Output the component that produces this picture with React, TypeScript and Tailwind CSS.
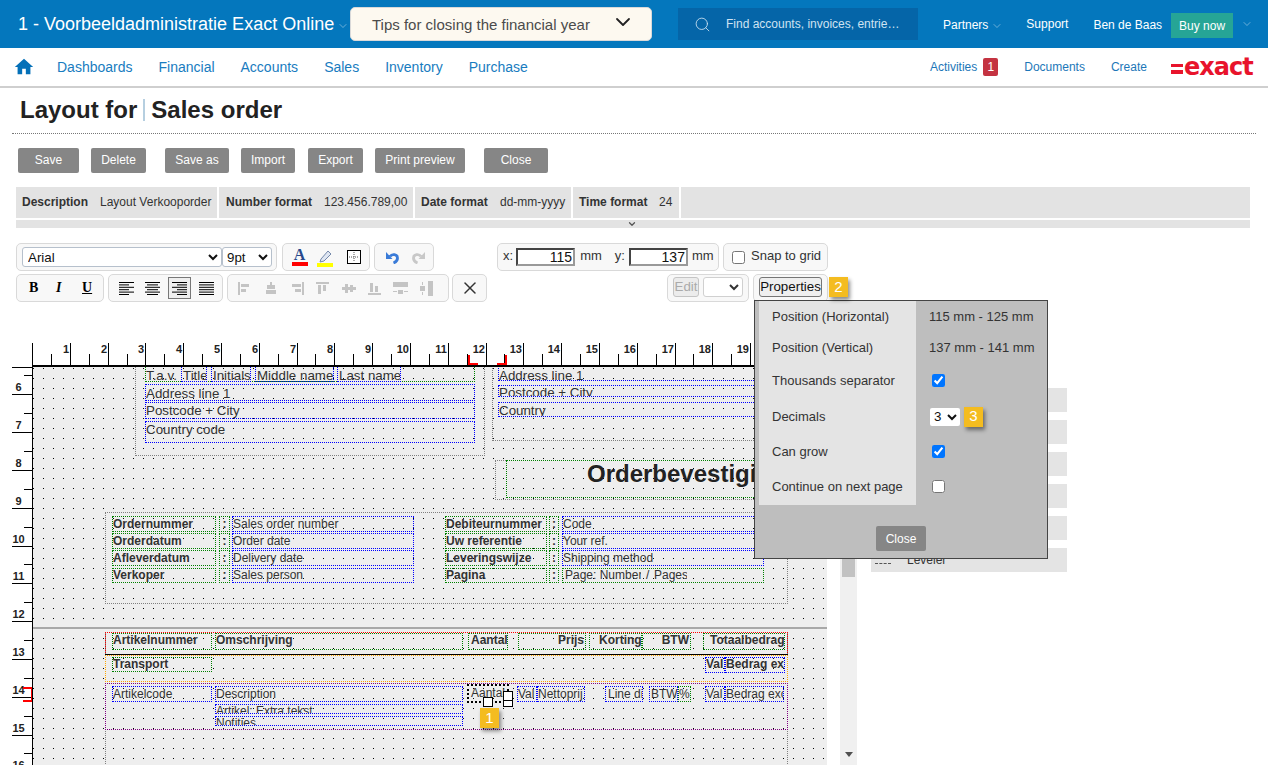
import React from "react";
import { ChevronDown, Search, X } from "lucide-react";
import { MdHome } from "react-icons/md";

const Gap = ({ w }: { w: number }) => <div className="shrink-0" style={{ width: w }} />;

type BoxP = {
  a: number; b: number; c: number; d: number; col: string; t?: string; bold?: boolean; size?: number;
  right?: boolean; center?: boolean; pt?: number; pl?: number; thick?: boolean;
};
const CX = 33, CY = 367;
const Box = ({ a, b, c, d, col, t, bold, size = 12, right, center, pt = 0, pl = 0, thick }: BoxP) => (
  <div
    className="absolute overflow-hidden whitespace-nowrap leading-[13px] text-[#333]"
    style={{
      left: a - CX, top: b - CY, width: c - a, height: d - b,
      border: `${thick ? 2 : 1}px dotted ${col}`,
      fontSize: size, fontWeight: bold ? 700 : 400,
      textAlign: right ? "right" : center ? "center" : "left",
      paddingTop: pt, paddingLeft: pl, paddingRight: right ? 1 : 0,
    }}
  >
    {t}
  </div>
);

const G = "#008000", B = "#0000ff", GR = "#808080";
const rows: [number, number][] = [[516, 532], [533, 549], [550, 566], [568, 583]];
const leftL = ["Ordernummer", "Orderdatum", "Afleverdatum", "Verkoper"];
const leftV = ["Sales order number", "Order date", "Delivery date", "Sales person"];
const rightL = ["Debiteurnummer", "Uw referentie", "Leveringswijze", "Pagina"];
const rightV = ["Code", "Your ref.", "Shipping method"];

const boxes: BoxP[] = [
  { a: 135, b: 340, c: 485, d: 456, col: GR },
  { a: 145, b: 340, c: 475, d: 382, col: G },
  { a: 145, b: 367, c: 180, d: 382, col: "transparent", t: "T.a.v.", size: 13.33, pt: 1 },
  { a: 181, b: 340, c: 207, d: 382, col: B, t: "Title", size: 13.33, pt: 28, pl: 1 },
  { a: 211, b: 340, c: 251, d: 382, col: B, t: "Initials", size: 13.33, pt: 28, pl: 1 },
  { a: 255, b: 340, c: 334, d: 382, col: B, t: "Middle name", size: 13.33, pt: 28, pl: 1 },
  { a: 337, b: 340, c: 401, d: 382, col: B, t: "Last name", size: 13.33, pt: 28, pl: 1 },
  { a: 145, b: 384, c: 475, d: 401, col: B, t: "Address line 1", size: 13.33, pt: 2 },
  { a: 145, b: 402, c: 475, d: 419, col: B, t: "Postcode + City", size: 13.33, pt: 1 },
  { a: 145, b: 421, c: 475, d: 443, col: B, t: "Country code", size: 13.33, pt: 1 },
  { a: 492, b: 340, c: 900, d: 441, col: GR },
  { a: 498, b: 340, c: 900, d: 381, col: B, t: "Address line 1", size: 13.33, pt: 28 },
  { a: 498, b: 385, c: 900, d: 397, col: B, t: "Postcode + City", size: 13.33 },
  { a: 498, b: 402, c: 900, d: 417, col: B, t: "Country", size: 13.33, pt: 1 },
  { a: 495, b: 460, c: 900, d: 500, col: GR },
  { a: 506, b: 460, c: 900, d: 498, col: G },
  { a: 105, b: 512, c: 788, d: 604, col: GR },
  { a: 105, b: 632, c: 788, d: 800, col: GR },
  { a: 105, b: 632, c: 788, d: 655, col: "#ff0000" },
  { a: 105, b: 655, c: 788, d: 682, col: "#ffa500" },
  { a: 105, b: 683, c: 788, d: 730, col: "#800080" },
  { a: 112, b: 633, c: 212, d: 650, col: G, t: "Artikelnummer", bold: true },
  { a: 215, b: 633, c: 463, d: 650, col: G, t: "Omschrijving", bold: true },
  { a: 468, b: 633, c: 508, d: 650, col: G, t: "Aantal", bold: true, pl: 2 },
  { a: 518, b: 633, c: 586, d: 650, col: G, t: "Prijs", bold: true, right: true },
  { a: 589, b: 633, c: 642, d: 650, col: G, t: "Korting", bold: true, pl: 9 },
  { a: 642, b: 633, c: 691, d: 650, col: G, t: "BTW", bold: true, right: true },
  { a: 703, b: 633, c: 785, d: 650, col: G, t: "Totaalbedrag", bold: true, pl: 6 },
  { a: 112, b: 657, c: 212, d: 672, col: G, t: "Transport", bold: true },
  { a: 705, b: 657, c: 725, d: 673, col: B, t: "Val", bold: true },
  { a: 725, b: 657, c: 785, d: 673, col: B, t: "Bedrag ex", bold: true },
  { a: 112, b: 686, c: 212, d: 702, col: B, t: "Artikelcode", pt: 1 },
  { a: 215, b: 686, c: 463, d: 702, col: B, t: "Description", pt: 1 },
  { a: 215, b: 704, c: 463, d: 714, col: B, t: "Artikel: Extra tekst" },
  { a: 215, b: 716, c: 463, d: 726, col: B, t: "Notities" },
  { a: 467, b: 684, c: 509, d: 703, col: "#000", t: "Aantal", thick: true, pl: 2, pt: 1 },
  { a: 517, b: 686, c: 537, d: 702, col: B, t: "Val", pt: 1 },
  { a: 537, b: 686, c: 585, d: 702, col: B, t: "Nettoprij", pt: 1 },
  { a: 605, b: 686, c: 643, d: 702, col: B, t: "Line di", pl: 2, pt: 1 },
  { a: 649, b: 686, c: 678, d: 702, col: B, t: "BTW", pl: 1, pt: 1 },
  { a: 678, b: 686, c: 691, d: 702, col: G, t: "%", pt: 1 },
  { a: 705, b: 686, c: 725, d: 702, col: B, t: "Val", pt: 1 },
  { a: 725, b: 686, c: 784, d: 702, col: B, t: "Bedrag exc", pt: 1 },
  ...rows.flatMap(([y1, y2], i): BoxP[] => {
    const pt = i < 3 ? 1 : 0;
    return [
      { a: 112, b: y1, c: 216, d: y2, col: G, t: leftL[i], bold: true, pt },
      { a: 219, b: y1, c: 230, d: y2, col: G, t: ":", bold: true, center: true, pt },
      { a: 232, b: y1, c: 414, d: y2, col: B, t: leftV[i], pt },
      { a: 445, b: y1, c: 547, d: y2, col: G, t: rightL[i], bold: true, pt },
      { a: 549, b: y1, c: 559, d: y2, col: G, t: ":", bold: true, center: true, pt },
      ...(i < 3 ? [{ a: 562, b: y1, c: 764, d: y2, col: B, t: rightV[i], pt } as BoxP] : [{ a: 562, b: y1, c: 764, d: y2, col: G } as BoxP]),
    ];
  }),
  { a: 563, b: 568, c: 642, d: 583, col: "transparent", t: "Page: Number", pl: 1 },
  { a: 642, b: 568, c: 653, d: 583, col: "transparent", t: "/", pl: 3 },
  { a: 653, b: 568, c: 688, d: 583, col: "transparent", t: "Pages" },
];

const Badge = ({ n, cls }: { n: string; cls: string }) => (
  <div className={`flex h-[20px] w-[19px] items-center justify-center bg-[#f4bc20] text-[15px] text-white shadow-[2px_3px_4px_rgba(0,0,0,0.45)] ${cls}`}>
    {n}
  </div>
);

const Group = ({ w, children, cls = "" }: { w: number; children?: React.ReactNode; cls?: string }) => (
  <div className={`flex h-[28px] shrink-0 items-center rounded-[5px] border border-[#d9d9d9] bg-[#f8f8f8] ${cls}`} style={{ width: w }}>
    {children}
  </div>
);

const Lines = ({ rows, color = "#000" }: { rows: [number, number][]; color?: string }) => (
  <svg width="15" height="13" viewBox="0 0 15 13" className="shrink-0">
    {rows.map(([x, w], i) => (
      <rect key={i} x={x} y={i * 2.4} width={w} height="1" fill={color} />
    ))}
  </svg>
);

const alignIcons: React.ReactNode[] = [
  <><rect x="1" y="1" width="2" height="13" /><rect x="4" y="3" width="8" height="3" /><rect x="4" y="8" width="5" height="3" /></>,
  <><rect x="7" y="1" width="2" height="3" /><rect x="4" y="4" width="8" height="4" /><rect x="3" y="9" width="10" height="4" /></>,
  <><rect x="13" y="1" width="2" height="13" /><rect x="3" y="3" width="9" height="3" /><rect x="6" y="8" width="6" height="3" /></>,
  <><rect x="1" y="1" width="13" height="2" /><rect x="3" y="4" width="3" height="9" /><rect x="8" y="4" width="3" height="6" /></>,
  <><rect x="1" y="6" width="14" height="3" /><rect x="4" y="3" width="3" height="9" /><rect x="9" y="4" width="3" height="7" /></>,
  <><rect x="1" y="12" width="13" height="2" /><rect x="3" y="2" width="3" height="9" /><rect x="8" y="5" width="3" height="6" /></>,
  <><rect x="0" y="1" width="15" height="5" /><rect x="5" y="9" width="5" height="4" /><rect x="0" y="10" width="4" height="1" /><rect x="11" y="10" width="4" height="1" /></>,
  <><rect x="9" y="0" width="5" height="15" /><rect x="1" y="5" width="5" height="5" /><rect x="3" y="1" width="1" height="3" /><rect x="3" y="11" width="1" height="3" /></>,
];

export default function App() {
  const font = { fontFamily: '"Liberation Sans", Arial, sans-serif' };
  return (
    <div className="relative h-[765px] w-[1268px] overflow-hidden bg-white text-[12px] text-[#333]" style={font}>
      {/* top bar */}
      <header className="flex h-[48px] items-center bg-[#0477bd] text-white">
        <span className="ml-[18px] w-[316px] whitespace-nowrap text-[18px]">1 - Voorbeeldadministratie Exact Online</span>
        <ChevronDown size={12} strokeWidth={1} className="ml-[3px] mt-[3px] shrink-0 text-[#cfe4f3]" />
        <div className="ml-[1px] flex h-[34px] w-[302px] items-center justify-between rounded-[5px] border border-[#d9d9d9] bg-[#fdf9f0] pl-[21px] pr-[16px] text-[15px] text-[#4b4b4b]">
          <span className="mt-[2px]">Tips for closing the financial year</span>
          <ChevronDown size={24} strokeWidth={1.8} className="mt-[-4px] text-[#222]" />
        </div>
        <div className="ml-[26px] flex h-[32px] w-[240px] items-center bg-[#0565a8] pl-[16px] text-[#cfe3f2]">
          <Search size={17} strokeWidth={1.2} />
          <span className="ml-[15px]">Find accounts, invoices, entrie…</span>
        </div>
        <span className="ml-[25px] mt-[2px]">Partners</span>
        <ChevronDown size={12} strokeWidth={1} className="ml-[3px] mt-[3px] text-[#cfe4f3]" />
        <span className="ml-[23px]">Support</span>
        <span className="ml-[25px] mt-[2px]">Ben de Baas</span>
        <div className="ml-[9px] mt-[3px] flex h-[25px] w-[62px] items-center justify-center bg-[#26a596]">Buy now</div>
        <ChevronDown size={12} strokeWidth={1} className="ml-[8px] text-[#cfe4f3]" />
      </header>

      {/* nav */}
      <nav className="flex h-[40px] items-center border-b-2 border-[#cfcfcf] text-[14px] text-[#187cc0]">
        <MdHome size={22} className="ml-[13px] text-[#0470b8]" />
        <span className="ml-[22px]">Dashboards</span>
        <span className="ml-[26px]">Financial</span>
        <span className="ml-[26px]">Accounts</span>
        <span className="ml-[26px]">Sales</span>
        <span className="ml-[26px]">Inventory</span>
        <span className="ml-[26px]">Purchase</span>
        <span className="ml-[402px] text-[12px] text-[#1d77b8]">Activities</span>
        <span className="ml-[6px] flex h-[18px] w-[15px] items-center justify-center rounded-[2px] bg-[#c43341] text-[12px] text-white">1</span>
        <span className="ml-[26px] text-[12px] text-[#1d77b8]">Documents</span>
        <span className="ml-[26px] text-[12px] text-[#1d77b8]">Create</span>
        <span className="ml-[24px] flex items-center leading-none text-[#e8142c]">
          <span className="mr-[1px] mt-[3px] flex flex-col gap-[3px]">
            <span className="block h-[3px] w-[12px] bg-[#e8142c]" />
            <span className="block h-[4px] w-[12px] bg-[#e8142c]" />
          </span>
          <span className="mt-[-1px] text-[24px] font-bold tracking-[-1px]" style={{ fontFamily: '"DejaVu Sans", sans-serif' }}>exact</span>
        </span>
      </nav>

      {/* title */}
      <div className="mx-[12px] flex h-[46px] items-center border-b border-dotted border-[#777] pb-[2px] pl-[8px] text-[24px] font-bold leading-none text-[#222]">
        Layout for
        <span className="mx-[6px] h-[22px] w-[2px] bg-[#b6cfe0]" />
        Sales order
      </div>

      {/* buttons */}
      <div className="mt-[14px] flex h-[25px] pl-[18px] text-[12px] text-white">
        {[["Save", 61, 12], ["Delete", 55, 19], ["Save as", 64, 12], ["Import", 54, 13], ["Export", 55, 12], ["Print preview", 90, 19], ["Close", 64, 0]].map(([t, w, g]) => (
          <React.Fragment key={t as string}>
            <div className="flex items-center justify-center rounded-[2px] bg-[#868686] pb-[1px]" style={{ width: w as number }}>{t}</div>
            <Gap w={g as number} />
          </React.Fragment>
        ))}
      </div>

      {/* info */}
      <div className="ml-[16px] mt-[14px] flex h-[31px] w-[1234px] gap-[2px] text-[12px] text-[#333]">
        <div className="flex w-[201px] items-center bg-[#e3e3e3] pb-[2px] pl-[6px]"><b className="w-[78px]">Description</b>Layout Verkooporder</div>
        <div className="flex w-[194px] items-center bg-[#e3e3e3] pb-[2px] pl-[7px]"><b className="w-[98px]">Number format</b>123.456.789,00</div>
        <div className="flex w-[156px] items-center bg-[#e3e3e3] pb-[2px] pl-[6px]"><b className="w-[79px]">Date format</b>dd-mm-yyyy</div>
        <div className="flex w-[106px] items-center bg-[#e3e3e3] pb-[2px] pl-[6px]"><b className="w-[80px]">Time format</b>24</div>
        <div className="flex-1 bg-[#e3e3e3]" />
      </div>
      <div className="ml-[16px] mt-[2px] flex h-[8px] w-[1234px] items-center bg-[#e3e3e3] pl-[611px]">
        <ChevronDown size={10} strokeWidth={3} className="text-[#555]" />
      </div>

      {/* toolbar row 1 */}
      <div className="ml-[16px] mt-[15px] flex h-[28px] items-center">
        <Group w={261} cls="pl-[5px]">
          <select defaultValue="Arial" className="h-[20px] w-[200px] rounded-[3px] border border-[#b6c0cc] bg-white pl-[1px] text-[13.33px] text-[#111]"><option>Arial</option></select>
          <select defaultValue="9pt" className="h-[20px] w-[50px] rounded-[3px] border border-[#b6c0cc] bg-white text-[13.33px] text-[#111]"><option>9pt</option></select>
        </Group>
        <Group w={88} cls="ml-[5px] pl-[8px]">
          <div className="flex w-[17px] flex-col items-center leading-none">
            <span className="h-[13px] text-[16px] font-bold leading-[13px] text-[#28498c]" style={{ fontFamily: '"Liberation Serif", serif' }}>A</span>
            <span className="mt-[1px] h-[4px] w-[16px] bg-[#f00]" />
          </div>
          <svg width="17" height="19" viewBox="0 0 17 19" className="ml-[9px]">
            <path d="M4 11 L11 3 L14 6 L7 13 L3 14 Z" fill="#dfe6f2" stroke="#7488aa" strokeWidth="1" />
            <rect x="0" y="15" width="16" height="4" fill="#ffff00" />
          </svg>
          <svg width="14" height="14" viewBox="0 0 14 14" className="ml-[13px]">
            <rect x="0.5" y="0.5" width="13" height="13" fill="#fff" stroke="#000" />
            <path d="M7 2v10M2 7h10" stroke="#555" strokeDasharray="1 1" />
          </svg>
        </Group>
        <Group w={60} cls="ml-[4px] pl-[10px]">
          <svg width="14" height="14" viewBox="0 0 14 14"><path d="M5 6.5 C7 3.5 12.5 4 12.5 8 C12.5 10 11 12 8.5 13" fill="none" stroke="#3a7bd8" strokeWidth="2.8" /><path d="M1 2 L1 9 L7.5 9 Z" fill="#3a7bd8" /></svg>
          <svg width="14" height="14" viewBox="0 0 14 14" className="ml-[13px]"><path d="M9 6.5 C7 3.5 1.5 4 1.5 8 C1.5 10 3 12 5.5 13" fill="none" stroke="#c8c8c8" strokeWidth="2.8" /><path d="M13 2 L13 9 L6.5 9 Z" fill="#c8c8c8" /></svg>
        </Group>
        <Group w={222} cls="ml-[63px] pl-[5px] text-[13px]">
          <span className="mb-[2px]">x:</span>
          <input readOnly value="115" className="ml-[3px] h-[18px] w-[59px] border-2 border-b-[#999] border-l-[#444] border-r-[#999] border-t-[#444] bg-white pr-[1px] text-right text-[14px] text-[#111]" />
          <span className="mb-[2px] ml-[5px]">mm</span>
          <span className="mb-[2px] ml-[13px]">y:</span>
          <input readOnly value="137" className="ml-[4px] h-[18px] w-[59px] border-2 border-b-[#999] border-l-[#444] border-r-[#999] border-t-[#444] bg-white pr-[1px] text-right text-[14px] text-[#111]" />
          <span className="mb-[2px] ml-[4px]">mm</span>
        </Group>
        <Group w={105} cls="ml-[4px] pl-[8px] text-[13px]">
          <input type="checkbox" readOnly className="h-[13px] w-[13px]" />
          <span className="mb-[2px] ml-[6px]">Snap to grid</span>
        </Group>
      </div>

      {/* toolbar row 2 */}
      <div className="ml-[16px] mt-[3px] flex h-[28px] items-center">
        <Group w={88} cls="pl-[12px]">
          <span className="w-[27px] text-[14px] font-bold leading-none text-black" style={{ fontFamily: '"Liberation Serif", serif' }}>B</span>
          <span className="w-[26px] text-[14px] font-bold italic leading-none text-black" style={{ fontFamily: '"Liberation Serif", serif' }}>I</span>
          <span className="text-[14px] font-bold leading-none text-black underline" style={{ fontFamily: '"Liberation Serif", serif' }}>U</span>
        </Group>
        <Group w={115} cls="ml-[4px] pl-[10px]">
          <Lines rows={[[0, 15], [0, 10], [0, 15], [0, 10], [0, 15], [0, 10]]} />
          <div className="ml-[11px]"><Lines rows={[[0, 15], [2, 11], [0, 15], [2, 11], [0, 15], [2, 11]]} /></div>
          <div className="ml-[8px] flex h-[22px] w-[23px] items-center justify-center border border-[#777] bg-[#eee]"><Lines rows={[[0, 15], [5, 10], [0, 15], [5, 10], [0, 15], [5, 10]]} /></div>
          <div className="ml-[8px]"><Lines rows={[[0, 15], [0, 15], [0, 15], [0, 15], [0, 15], [0, 15]]} /></div>
        </Group>
        <Group w={222} cls="ml-[4px] gap-[11px] pl-[9px]">
          {alignIcons.map((n, i) => (
            <svg key={i} width="15" height="15" viewBox="0 0 15 15" fill="#c4c4c4" className="shrink-0">{n}</svg>
          ))}
        </Group>
        <Group w={35} cls="ml-[3px] justify-center">
          <X size={20} strokeWidth={1.8} className="text-[#333]" />
        </Group>
        <Group w={82} cls="ml-[180px] pb-[2px] pl-[5px]">
          <div className="flex h-[20px] w-[26px] items-center justify-center rounded-[3px] border border-[#c4c4c4] bg-[#ececec] text-[13.33px] text-[#aaa]">Edit</div>
          <select disabled className="ml-[4px] h-[20px] w-[40px] rounded-[3px] border border-[#d0d0d0] bg-white" />
        </Group>
        <Group w={75} cls="ml-[4px] pb-[2px] pl-[5px]">
          <div className="flex h-[20px] w-[63px] items-center justify-center rounded-[3px] border border-[#767676] bg-[#efefef] text-[13.33px] text-[#111]">Properties</div>
        </Group>
        <Badge n="2" cls="z-10 mb-[2px] ml-[1px]" />
      </div>

      {/* designer */}
      <div className="ml-[12px] mt-[41px] flex items-start">
        <div className="grid h-[422px] w-[815px] grid-cols-[21px_1fr] grid-rows-[24px_1fr]">
          <div className="border-r border-black" />
          <div className="relative border-b-2 border-black">
            {Array.from({ length: 21 }, (_, i) => i).map((k) => (
              <React.Fragment key={k}>
                {k > 0 && <div className="absolute top-0 h-[22px] w-[1px] bg-black" style={{ left: Math.round(-1 + 37.8 * k) }} />}
                <div className="absolute top-[11px] h-[11px] w-[1px] bg-black" style={{ left: Math.round(-1 + 37.8 * k + 18.9) }} />
                {k > 0 && (
                  <div className="absolute top-[0px] w-[24px] text-right text-[11px] font-bold leading-[13px] text-[#222]" style={{ left: Math.round(-1 + 37.8 * k) - 25 }}>{k}</div>
                )}
              </React.Fragment>
            ))}
            <div className="absolute left-[435px] top-[12px] h-[10px] w-[2px] bg-[#f00]" />
            <div className="absolute left-[435px] top-[20px] h-[2px] w-[10px] bg-[#f00]" />
            <div className="absolute left-[472px] top-[12px] h-[10px] w-[2px] bg-[#f00]" />
            <div className="absolute left-[464px] top-[20px] h-[2px] w-[10px] bg-[#f00]" />
          </div>
          <div className="relative overflow-hidden border-r border-black">
            <div className="absolute left-0 right-0 top-0 h-[1px] bg-black" />
            {Array.from({ length: 11 }, (_, i) => i + 6).map((n) => {
              const y = Math.round(27.3 + 37.8 * (n - 6));
              return (
                <React.Fragment key={n}>
                  <div className="absolute left-0 right-0 h-[1px] bg-black" style={{ top: y }} />
                  <div className="absolute left-[12px] right-0 h-[1px] bg-black" style={{ top: y - 19 }} />
                  <div className="absolute left-0 w-[13px] text-center text-[11px] font-bold leading-[13px] text-[#222]" style={{ top: y - 13 }}>{n}</div>
                </React.Fragment>
              );
            })}
            <div className="absolute left-[11px] top-[320px] h-[2px] w-[9px] bg-[#f00]" />
            <div className="absolute left-[19px] top-[320px] h-[15px] w-[2px] bg-[#f00]" />
            <div className="absolute left-[11px] top-[333px] h-[2px] w-[9px] bg-[#f00]" />
          </div>
          <div className="relative overflow-hidden bg-[#eeeeee] bg-[radial-gradient(circle_at_0.5px_0.5px,#000_0.9px,transparent_0.9px)] bg-[length:10px_10px] bg-[position:0_1px]">
            {boxes.map((p, i) => <Box key={i} {...p} />)}
            <div className="absolute left-[554px] top-[93px] whitespace-nowrap text-[24px] font-bold leading-[28px] text-[#222]">Orderbevestiging</div>
            <div className="absolute left-0 right-0 top-[260px] h-[2px] bg-[#a8a8a8]" />
            <div className="absolute left-[72px] top-[287px] h-[1px] w-[683px] bg-black" />
            <div className="absolute left-[450px] top-[330px] h-[10px] w-[10px] border border-black bg-white" />
            <div className="absolute left-[470px] top-[324px] h-[10px] w-[10px] border border-black bg-white" />
            <div className="absolute left-[470px] top-[333px] h-[7px] w-[10px] border border-black bg-white" />
            <Badge n="1" cls="absolute left-[447px] top-[341px]" />
          </div>
        </div>
        <div className="ml-[13px] flex h-[422px] w-[17px] flex-col items-center bg-[#f0f0f0] pt-[2px]">
          <div className="mt-[24px] h-[208px] w-[13px] bg-[#c2c2c2]" />
          <div className="mb-[8px] mt-auto h-0 w-0 border-x-[4px] border-t-[5px] border-x-transparent border-t-[#505050]" />
        </div>
        <div className="ml-[14px] mt-[45px] flex w-[196px] flex-col gap-[8px]">
          {[0, 1, 2, 3, 4].map((i) => <div key={i} className="h-[24px] bg-[#e4e4e4]" />)}
          <div className="relative flex h-[24px] items-center bg-[#e4e4e4] pl-[4px]">
            <div className="flex w-[16px] flex-col gap-[4px] pt-[2px]">
              <span className="block h-[1px] w-[16px] bg-[#555]" />
              <span className="block w-[16px] border-t border-dashed border-[#555]" />
            </div>
            <span className="ml-[16px] text-[12px]">Leveler</span>
          </div>
        </div>
      </div>

      {/* properties popup */}
      <div className="absolute left-[754px] top-[300px] h-[259px] w-[294px] border border-[#444] bg-[#bebebe] pl-[4px] text-[13px] text-[#333]">
        {[
          [31, "Position (Horizontal)", "115 mm - 125 mm"],
          [32, "Position (Vertical)", "137 mm - 141 mm"],
          [34, "Thousands separator", "c1"],
          [37, "Decimals", "s"],
          [34, "Can grow", "c1"],
          [36, "Continue on next page", "c0"],
        ].map(([h, l, v]) => (
          <div key={l as string} className="flex" style={{ height: h as number }}>
            <div className="flex w-[157px] items-center bg-[#e4e4e4] pl-[13px]">{l}</div>
            <div className="flex items-center pl-[13px]">
              {v === "c1" ? (
                <input type="checkbox" readOnly checked className="mb-[2px] ml-[3px] h-[13px] w-[13px]" />
              ) : v === "c0" ? (
                <input type="checkbox" readOnly className="mb-[2px] ml-[3px] h-[13px] w-[13px]" />
              ) : v === "s" ? (
                <>
                  <select defaultValue="3" className="ml-[1px] h-[18px] w-[30px] rounded-[2px] bg-white text-[13.33px] text-[#111]"><option>3</option></select>
                  <Badge n="3" cls="ml-[4px]" />
                </>
              ) : (
                <span>{v}</span>
              )}
            </div>
          </div>
        ))}
        <div className="ml-[117px] mt-[21px] flex h-[25px] w-[50px] items-center justify-center rounded-[2px] bg-[#868686] text-[12px] text-white">Close</div>
      </div>
    </div>
  );
}
